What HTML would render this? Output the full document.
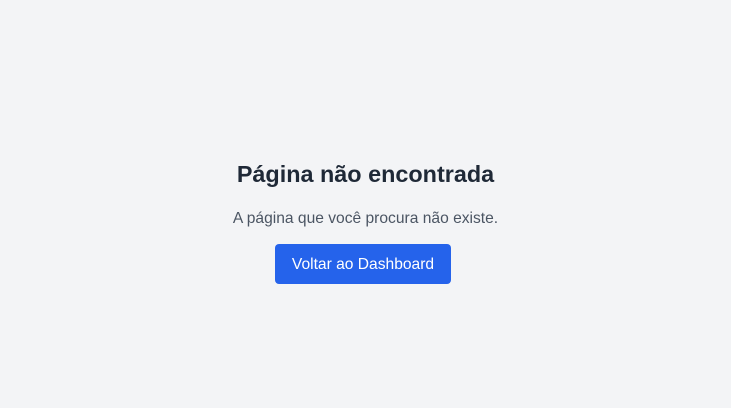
<!DOCTYPE html>
<html><head><meta charset="utf-8"><style>
html,body{margin:0;padding:0;width:731px;height:408px;background:#f3f4f6;font-family:"Liberation Sans",sans-serif;overflow:hidden}
.wrap{position:absolute;left:0;right:0;top:0;height:408px;text-align:center}
h1{position:absolute;left:0;right:0;top:158px;margin:0;font-size:23.4px;line-height:32px;font-weight:bold;color:#1f2937}
p{position:absolute;left:0;right:0;top:207px;margin:0;font-size:15.6px;line-height:24px;color:#4b5563}
.btn{position:absolute;left:275px;top:244px;width:176px;height:40px;background:#2563eb;color:#fff;border-radius:4px;font-size:15.6px;line-height:42px;text-align:center}
</style></head><body><div class="wrap">
<h1>Página não encontrada</h1>
<p>A página que você procura não existe.</p>
<div class="btn">Voltar ao Dashboard</div>
</div></body></html>
